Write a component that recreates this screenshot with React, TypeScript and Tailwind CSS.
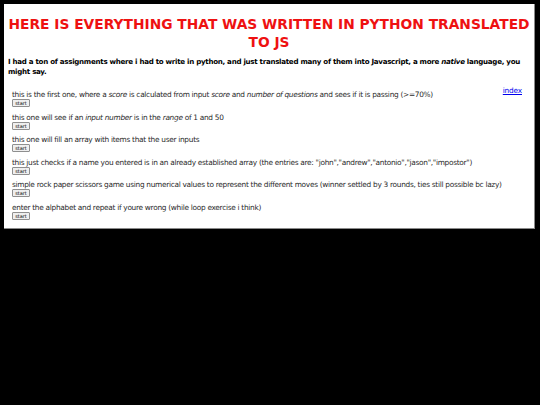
import React from "react";

const items: React.ReactNode[] = [
  <>
    this is the first one, where a <i>score</i> is calculated from input <i>score</i> and{" "}
    <i>number of questions</i> and sees if it is passing (&gt;=70%)
  </>,
  <>
    this one will see if an <i>input number</i> is in the <i>range</i> of 1 and 50
  </>,
  <>this one will fill an array with items that the user inputs</>,
  <>
    this just checks if a name you entered is in an already established array (the entries are:
    "john","andrew","antonio","jason","impostor")
  </>,
  <>
    simple rock paper scissors game using numerical values to represent the different moves (winner
    settled by 3 rounds, ties still possible bc lazy)
  </>,
  <>enter the alphabet and repeat if youre wrong (while loop exercise i think)</>,
];

export default function App() {
  return (
    <div className="w-[540px] h-[405px] bg-black pt-[4px] px-[4px] font-['DejaVu_Sans',Verdana,sans-serif]">
      <div className="w-[531px] bg-white border-r border-b border-[#8a8a8a] pb-[8px]">
        <h1 className="pt-[12px] px-[2px] text-center text-[13.8px] leading-[17.5px] font-bold text-[#ee1111]">
          HERE IS EVERYTHING THAT WAS WRITTEN IN PYTHON TRANSLATED TO JS
        </h1>
        <p className="mt-[6px] px-[4px] text-[7.1px] leading-[10px] font-bold text-black tracking-[-0.28px]">
          I had a ton of assignments where i had to write in python, and just translated many of them into
          Javascript, a more <i>native</i> language, you might say.
        </p>
        <div className="flex justify-end pr-[12px] mt-[8.5px]">
          <a href="#" className="text-[7.4px] leading-[9px] text-[#0000ee] underline tracking-[-0.2px]">
            index
          </a>
        </div>
        <div className="flex flex-col gap-[6.6px] pl-[8px] -mt-[3.5px]">
          {items.map((t, i) => (
            <div key={i} className="flex flex-col items-start">
              <div className="text-[7.4px] leading-[8px] text-[#2a2a2a] tracking-[-0.3px]">{t}</div>
              <button className="h-[8px] w-[18px] flex items-center justify-center bg-[#efefef] border border-[#8f8f8f] rounded-[1px] text-[5px] leading-[6px] text-black">
                start
              </button>
            </div>
          ))}
        </div>
      </div>
    </div>
  );
}
